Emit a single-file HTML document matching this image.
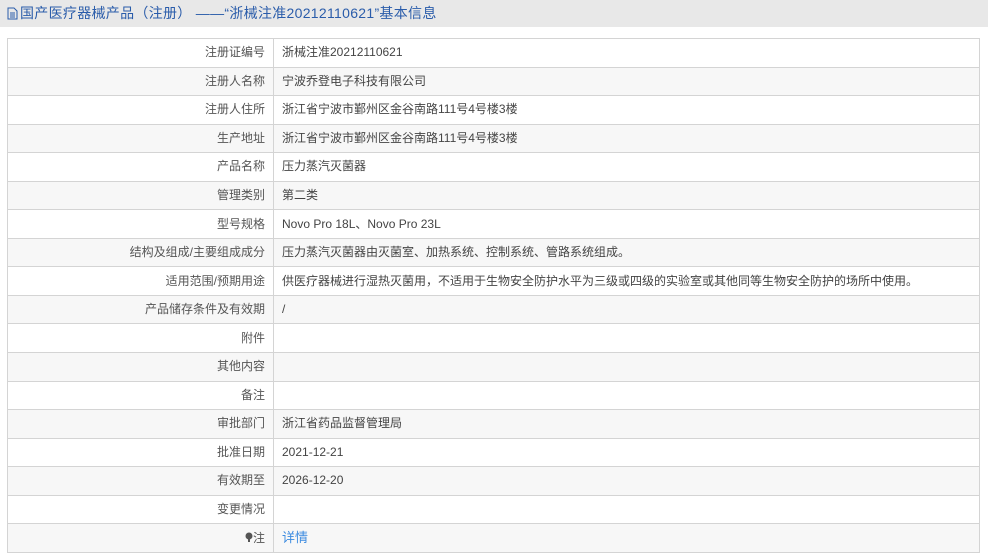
<!DOCTYPE html>
<html><head><meta charset="utf-8">
<style>
body{margin:0;width:988px;height:559px;background:#fff;font-family:"Liberation Sans","Noto Sans CJK SC",sans-serif;overflow:hidden}
.hd{height:27px;background:#e8e8e8;color:#2a5caa;font-size:14px;line-height:27px;padding-left:7px;display:flex;align-items:center;letter-spacing:0.3px}
.hd svg{margin-right:2px}
table{position:absolute;left:7px;top:38px;width:973px;border-collapse:collapse;font-size:12px;color:#444;table-layout:fixed}
td{height:27.55px;border:1px solid #d4d4d4;padding:0;line-height:27px;white-space:nowrap}
td.l{width:257px;text-align:right;padding-right:8px;color:#555}
td.v{padding-left:8px}
tr:nth-child(even) td{background:#f7f7f7}
a{color:#3c8be0;text-decoration:none;font-size:13px}
</style></head><body>
<div class="hd"><svg width="11" height="13" viewBox="0 0 11 13"><path d="M1 1h6l3 3v8H1z" fill="none" stroke="#2a5caa"/><path d="M3 6h5M3 8h5M3 10h5" stroke="#2a5caa"/></svg>国产医疗器械产品（注册） ——“浙械注准20212110621”基本信息</div>
<table>
<tr><td class="l">注册证编号</td><td class="v">浙械注准20212110621</td></tr>
<tr><td class="l">注册人名称</td><td class="v">宁波乔登电子科技有限公司</td></tr>
<tr><td class="l">注册人住所</td><td class="v">浙江省宁波市鄞州区金谷南路111号4号楼3楼</td></tr>
<tr><td class="l">生产地址</td><td class="v">浙江省宁波市鄞州区金谷南路111号4号楼3楼</td></tr>
<tr><td class="l">产品名称</td><td class="v">压力蒸汽灭菌器</td></tr>
<tr><td class="l">管理类别</td><td class="v">第二类</td></tr>
<tr><td class="l">型号规格</td><td class="v">Novo Pro 18L、Novo Pro 23L</td></tr>
<tr><td class="l">结构及组成/主要组成成分</td><td class="v">压力蒸汽灭菌器由灭菌室、加热系统、控制系统、管路系统组成。</td></tr>
<tr><td class="l">适用范围/预期用途</td><td class="v">供医疗器械进行湿热灭菌用，不适用于生物安全防护水平为三级或四级的实验室或其他同等生物安全防护的场所中使用。</td></tr>
<tr><td class="l">产品储存条件及有效期</td><td class="v">/</td></tr>
<tr><td class="l">附件</td><td class="v"></td></tr>
<tr><td class="l">其他内容</td><td class="v"></td></tr>
<tr><td class="l">备注</td><td class="v"></td></tr>
<tr><td class="l">审批部门</td><td class="v">浙江省药品监督管理局</td></tr>
<tr><td class="l">批准日期</td><td class="v">2021-12-21</td></tr>
<tr><td class="l">有效期至</td><td class="v">2026-12-20</td></tr>
<tr><td class="l">变更情况</td><td class="v"></td></tr>
<tr><td class="l"><svg width="8" height="11" viewBox="0 0 8 11" style="vertical-align:-1px"><circle cx="4" cy="4" r="3.5" fill="#555"/><rect x="3" y="7" width="2" height="3" fill="#555"/></svg>注</td><td class="v"><a>详情</a></td></tr>
</table>
</body></html>
